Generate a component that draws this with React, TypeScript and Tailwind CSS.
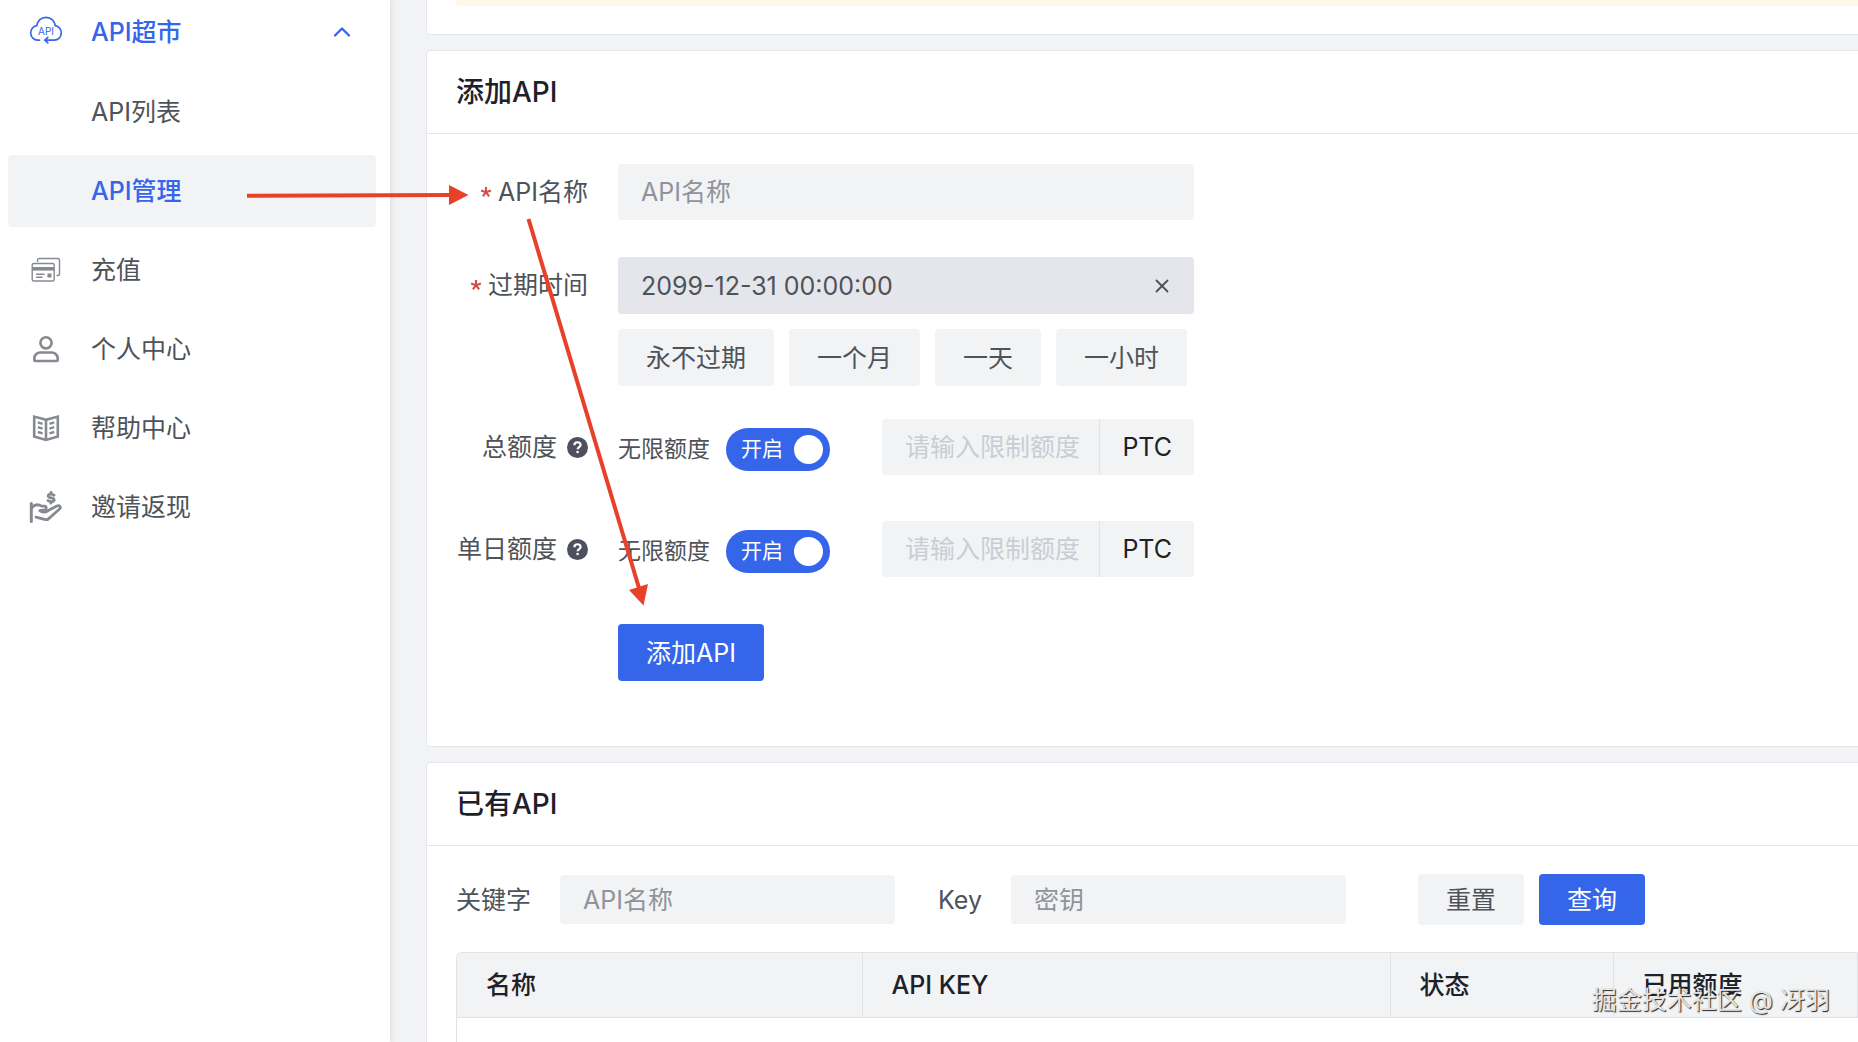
import { useState } from "react";
import type { ReactNode } from "react";
import { ChevronUp, X } from "lucide-react";
import clsx from "clsx";

const PRESETS = ["永不过期", "一个月", "一天", "一小时"];

function ApiCloudIcon() {
  return (
    <svg width="34" height="32" viewBox="0 0 34 32" fill="none" stroke="currentColor" strokeWidth="1.7" strokeLinecap="round" strokeLinejoin="round">
      <path d="M10.5 24.2H8.6a7.3 7.3 0 0 1-.8-14.5C8.4 4.9 12.3 1.3 17 1.3s8.6 3.600 9.2 8.4a7.3 7.3 0 0 1-.8 14.5H16" />
      <path d="M18.8 21.300 16 24.2l2.8 2.6" />
      <text x="17" y="18.5" fontSize="10" textAnchor="middle" fill="currentColor" stroke="none" className="font-[Inter,sans-serif] font-normal">
        API
      </text>
    </svg>
  );
}

function CardsIcon() {
  return (
    <svg width="30" height="26" viewBox="0 0 30 26" fill="none" stroke="currentColor" strokeWidth="1.4">
      <path d="M6.500 5V3A1.500 1.500 0 0 1 8 1.500h19A1.500 1.500 0 0 1 28.500 3v14a1.500 1.500 0 0 1-1.500 1.500h-1.500" />
      <rect x="1.200" y="6.500" width="22" height="17.500" rx="1.500" />
      <path d="M1.500 11.800h21.500" strokeWidth="3.600" />
      <path d="M5 17.300h8.500M5 20.200h6.500" strokeWidth="1.400" />
      <rect x="16.500" y="16.500" width="4" height="4" fill="currentColor" stroke="none" />
    </svg>
  );
}

function UserIcon() {
  return (
    <svg width="28" height="28" viewBox="0 0 28 28" fill="none" stroke="currentColor" strokeWidth="2.6" strokeLinejoin="round">
      <circle cx="14" cy="7.800" r="5.600" />
      <path d="M2.300 25v-1.500a6 6 0 0 1 6-6h11.400a6 6 0 0 1 6 6V25a1 1 0 0 1-1 1H3.300a1 1 0 0 1-1-1z" />
    </svg>
  );
}

function BookIcon() {
  return (
    <svg width="28" height="28" viewBox="0 0 28 28" fill="none" stroke="currentColor" strokeWidth="2.4">
      <path d="M14 5.800 2.200 2.600v20l11.800 3.400 11.800-3.400v-20z" strokeWidth="2.600" />
      <path d="M14 5.500v20.500" strokeWidth="2.600" />
      <path d="m5.800 8.400 4.800 1.400m-4.800 3.400 4.800 1.400m-4.800 3.400 4.800 1.400M22.200 8.400l-4.800 1.400m4.800 3.400-4.800 1.400m4.800 3.400-4.800 1.400" />
    </svg>
  );
}

function HandCoinIcon() {
  return (
    <svg width="34" height="32" viewBox="0 0 34 32" fill="none" stroke="currentColor" strokeWidth="2.800" strokeLinecap="round" strokeLinejoin="round">
      <path d="M2.300 12.500v18" strokeWidth="3" />
      <path d="M3 16.500c3-3.200 6.500-3.300 9.500-1.300h3c2.200 0 2.200 3.200.300 3.600l-5 .900c2.500 2 6 1.500 8.500-.2l8.500-4.500c2.800-1.200 4.800 1.200 2.500 3.200L21 26.500c-1.500 1.800-3.500 2.600-5.500 1.900L7 26.200" />
      <path d="M25 4.200c-1.500-1.600-5.800-1.600-5.800.8 0 2.400 6 1.300 6 3.700s-4.700 2.300-6.200.8M22 1.300v1.200M22 11v1.200" strokeWidth="2.800" />
    </svg>
  );
}

function RequiredMark() {
  return (
    <svg width="12" height="12" viewBox="0 0 12 12" className="text-[#d3504a]" stroke="currentColor" strokeWidth="2.100" aria-hidden="true">
      <path d="M6 6.200V1M6 6.200 1.100 4.600M6 6.200l4.900-1.600M6 6.200l-3.100 4.200M6 6.200l3.100 4.200" />
    </svg>
  );
}

function HelpIcon() {
  return (
    <svg width="21" height="21" viewBox="0 0 21 21" className="text-[#4e5060]" aria-hidden="true">
      <circle cx="10.500" cy="10.500" r="10.500" fill="currentColor" />
      <path d="M7.400 8.300c0-4 6.200-4 6.200-.3 0 2.100-3 2.200-3 4.300" fill="none" stroke="#fff" strokeWidth="2.200" />
      <circle cx="10.600" cy="15" r="1.300" fill="#fff" />
    </svg>
  );
}

type NavItemProps = {
  label: string;
  icon?: ReactNode;
  active?: boolean;
  selected?: boolean;
  expanded?: boolean;
};

function NavItem({ label, icon, active, selected, expanded }: NavItemProps) {
  return (
    <li className="first:mb-px">
      <a
        href="#"
        className={clsx(
          "flex h-[72px] items-center rounded-sm pr-5 pl-4",
          selected && "bg-[#f2f3f5]",
          active ? "font-medium text-[#3566ea]" : "text-[#4e5259]"
        )}
      >
        <span className={clsx("flex w-11 shrink-0 justify-center", !active && "text-[#868a90]")}>{icon}</span>
        <span className="ml-[23px] flex-1">{label}</span>
        {expanded && <ChevronUp size={28} strokeWidth={2} />}
      </a>
    </li>
  );
}

type FormRowProps = {
  id: string;
  label: string;
  required?: boolean;
  help?: boolean;
  children: ReactNode;
};

function FormRow({ id, label, required, help, children }: FormRowProps) {
  return (
    <div className="flex gap-[30px]">
      <label htmlFor={id} className="flex h-14 w-[132px] shrink-0 items-center justify-end text-[#4e5259]">
        {required && <span className="mr-1.5"><RequiredMark /></span>}
        {label}
        {help && <span className="ml-2.5"><HelpIcon /></span>}
      </label>
      {children}
    </div>
  );
}

function QuotaField({ id, label }: { id: string; label: string }) {
  const [unlimited, setUnlimited] = useState(true);

  return (
    <FormRow id={id} label={label} help>
      <div className="flex w-[576px] items-center justify-between">
        <label className="flex cursor-pointer items-center gap-4 pt-1">
          <span className="text-[23px] text-[#4e5259]">无限额度</span>
          <input
            type="checkbox"
            role="switch"
            checked={unlimited}
            onChange={(e) => setUnlimited(e.target.checked)}
            className="peer sr-only"
          />
          <span className="flex h-[43px] w-[104px] items-center justify-between rounded-full bg-[#c9cdd4] pr-[7px] pl-[15px] text-[21px] text-white peer-checked:bg-[#3566ea]">
            {unlimited ? "开启" : "关闭"}
            <span className="size-[29px] rounded-full bg-white" />
          </span>
        </label>
        <div className="flex h-14 w-[312px] rounded-sm bg-[#f2f3f5]">
          <input
            id={id}
            type="text"
            disabled={unlimited}
            placeholder="请输入限制额度"
            className="min-w-0 flex-1 pl-[23px] placeholder:text-[#c9cdd4]"
          />
          <span className="flex items-center border-l border-[#e1e3e8] px-[22px] text-[#1d2129]">PTC</span>
        </div>
      </div>
    </FormRow>
  );
}

function Card({ title, children }: { title: string; children: ReactNode }) {
  return (
    <section className="rounded-l border-y border-l border-[#e5e6eb] bg-white">
      <h2 className="flex h-[83px] items-center border-b border-[#e5e6eb] pl-[29px] text-[28px] font-medium text-[#1d2129]">
        {title}
      </h2>
      {children}
    </section>
  );
}

function SearchField({ id, label, placeholder }: { id: string; label: string; placeholder: string }) {
  return (
    <div className="flex items-center gap-[29px]">
      <label htmlFor={id} className="text-[#4e5259]">{label}</label>
      <input
        id={id}
        type="text"
        placeholder={placeholder}
        className="h-[49px] w-[335px] rounded-sm bg-[#f2f3f5] px-[23px] placeholder:text-[#8f939b]"
      />
    </div>
  );
}

function Annotations() {
  return (
    <svg width="700" height="640" viewBox="0 0 700 640" className="pointer-events-none absolute top-0 left-0 z-20 text-[#e8412a]" fill="currentColor" stroke="none" aria-hidden="true">
      <path d="M247 195.800 452 195" stroke="currentColor" strokeWidth="4" />
      <path d="M449 185v20l19.500-10z" />
      <path d="M528.500 219 639 588" stroke="currentColor" strokeWidth="4" />
      <path d="M629 590l19-6-4.500 21.500z" />
    </svg>
  );
}

export default function App() {
  const [name, setName] = useState("");
  const [expires, setExpires] = useState("2099-12-31 00:00:00");

  return (
    <div className="relative flex h-screen overflow-hidden bg-[#f2f3f5] font-[Inter,'Noto_Sans_CJK_SC',sans-serif] text-[25px] leading-9 text-[#1d2129]">
      {/* Sidebar */}
      <nav className="z-10 w-[390px] shrink-0 bg-white pr-3.5 pl-2 shadow-[2px_0_5px_rgba(0,0,0,0.08)]">
        <ul className="-mt-1 flex flex-col gap-[7px]">
          <NavItem label="API超市" icon={<ApiCloudIcon />} active expanded />
          <NavItem label="API列表" />
          <NavItem label="API管理" active selected />
          <NavItem label="充值" icon={<CardsIcon />} />
          <NavItem label="个人中心" icon={<UserIcon />} />
          <NavItem label="帮助中心" icon={<BookIcon />} />
          <NavItem label="邀请返现" icon={<HandCoinIcon />} />
        </ul>
      </nav>

      <main className="flex min-w-0 flex-1 flex-col gap-[15px] pl-9">
        {/* Tail of the notice card */}
        <section className="rounded-bl border-b border-l border-[#e5e6eb] bg-white pb-7 pl-[29px]">
          <div className="h-1.5 rounded-bl-sm bg-[#fff7e8]" />
        </section>

        <Card title="添加API">
          <form className="px-[29px] pt-[30px] pb-[65px]" onSubmit={(e) => e.preventDefault()}>
            <FormRow id="api-name" label="API名称" required>
              <input
                id="api-name"
                type="text"
                value={name}
                onChange={(e) => setName(e.target.value)}
                placeholder="API名称"
                className="h-14 w-[576px] rounded-sm bg-[#f2f3f5] px-[23px] placeholder:text-[#8f939b]"
              />
            </FormRow>

            <div className="mt-[37px]">
              <FormRow id="expires" label="过期时间" required>
                <div>
                  <div className="flex h-[57px] w-[576px] items-center rounded-sm bg-[#e5e6eb] pr-[21px]">
                    <input
                      id="expires"
                      type="text"
                      value={expires}
                      onChange={(e) => setExpires(e.target.value)}
                      className="min-w-0 flex-1 pl-[23px] text-[#4e5259]"
                    />
                    <button type="button" aria-label="清除" onClick={() => setExpires("")} className="text-[#4e5259]">
                      <X size={22} strokeWidth={2} />
                    </button>
                  </div>
                  <div className="mt-[15px] flex gap-[15px]">
                    {PRESETS.map((preset) => (
                      <button key={preset} type="button" className="h-[57px] rounded-sm bg-[#f2f3f5] px-7 text-[#4e5259]">
                        {preset}
                      </button>
                    ))}
                  </div>
                </div>
              </FormRow>
            </div>

            <div className="mt-[33px] flex flex-col gap-[46px]">
              <QuotaField id="total-quota" label="总额度" />
              <QuotaField id="daily-quota" label="单日额度" />
            </div>

            <button type="submit" className="mt-[47px] ml-[162px] h-[57px] rounded-sm bg-[#3566ea] px-7 text-white">
              添加API
            </button>
          </form>
        </Card>

        <Card title="已有API">
          <div className="h-[240px] pt-7 pl-[29px]">
            <form className="flex items-center" onSubmit={(e) => e.preventDefault()}>
              <SearchField id="keyword" label="关键字" placeholder="API名称" />
              <div className="ml-[43px]">
                <SearchField id="key" label="Key" placeholder="密钥" />
              </div>
              <div className="ml-[72px] flex gap-[15px]">
                <button type="reset" className="h-[51px] rounded-sm bg-[#f2f3f5] px-7 text-[#4e5259]">重置</button>
                <button type="submit" className="h-[51px] rounded-sm bg-[#3566ea] px-7 text-white">查询</button>
              </div>
            </form>

            <div className="mt-[27px] h-[140px] overflow-hidden rounded-tl-md border-t border-l border-[#e1e3e6]">
              <table className="w-full table-fixed text-left">
                <thead className="bg-[#f2f3f5]">
                  <tr className="h-16 border-b border-[#e1e3e6]">
                    <th className="w-[405px] border-r border-[#e1e3e6] px-[29px] font-medium">名称</th>
                    <th className="w-[528px] border-r border-[#e1e3e6] px-[29px] font-medium">API KEY</th>
                    <th className="w-[223px] border-r border-[#e1e3e6] px-[29px] font-medium">状态</th>
                    <th className="border-r border-[#e1e3e6] px-[29px] font-medium">已用额度</th>
                  </tr>
                </thead>
              </table>
            </div>
          </div>
        </Card>
      </main>

      <Annotations />
      <p className="absolute right-7 bottom-6 z-20 text-[#e4e4e4] [text-shadow:1px_1px_1px_#222]">
        掘金技术社区 @ 冴羽
      </p>
    </div>
  );
}
